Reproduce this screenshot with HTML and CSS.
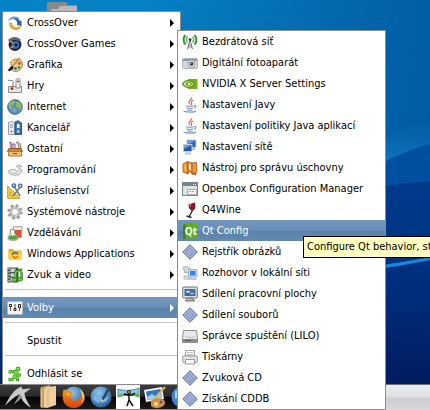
FILE: index.html
```
<!DOCTYPE html>
<html lang="cs">

<head>
    <meta charset="UTF-8">
    <title>Plocha</title>
    <link rel="stylesheet" href="styles.css">
</head>

<body>
    <svg class="defs" aria-hidden="true">
        <defs>
            <linearGradient id="sky" x1="0" y1="0" x2="0" y2="1">
                <stop offset="0" stop-color="#0683c8" />
                <stop offset="0.3" stop-color="#0873b8" />
                <stop offset="0.55" stop-color="#0560a8" />
                <stop offset="0.8" stop-color="#00397c" />
                <stop offset="1" stop-color="#001b5c" />
            </linearGradient>
            <linearGradient id="shade" x1="0" y1="0" x2="1" y2="0">
                <stop offset="0.3" stop-color="#005ca2" stop-opacity="0" />
                <stop offset="1" stop-color="#005ca2" stop-opacity="0.95" />
            </linearGradient>
            <linearGradient id="ray" x1="0" y1="0" x2="0" y2="1">
                <stop offset="0" stop-color="#0a67ad" stop-opacity="0" />
                <stop offset="1" stop-color="#1c86d8" />
            </linearGradient>
            <linearGradient id="deep" x1="0" y1="0" x2="0" y2="1">
                <stop offset="0" stop-color="#003c8c" />
                <stop offset="0.45" stop-color="#002f7c" />
                <stop offset="1" stop-color="#001858" />
            </linearGradient>
            <linearGradient id="fox" x1="0" y1="0" x2="0" y2="1">
                <stop offset="0" stop-color="#f79a1c" />
                <stop offset="1" stop-color="#d6400c" />
            </linearGradient>
            <radialGradient id="ball" cx="0.4" cy="0.3" r="0.8">
                <stop offset="0" stop-color="#8fc8ee" />
                <stop offset="1" stop-color="#17548e" />
            </radialGradient>
            <symbol id="diamond" viewBox="0 0 16 16">
                <path d="M8 .7 15.3 8 8 15.3.7 8z" fill="#8da0cb" stroke="#5f6d94" />
                <path d="M8 2.2 13.8 8 8 13.8 2.2 8z" fill="none" stroke="#b5c3e2" stroke-width=".8" />
                <path d="M5 9.5 9.5 4.5M6.5 11 11 6.5" stroke="#b4c2e2" />
            </symbol>
            <symbol id="java" viewBox="0 0 16 16">
                <path d="M9.5.5c1 2-3.5 3-2.5 5 .3.8 1 1.200 .8 2M11.500 3c-2 .8-3 1.800-2 3 .5.7 0 1.300-.5 1.700" fill="none" stroke="#e0605a" stroke-width="1.100" />
                <path d="M4.500 8.500c-1.500 1 5 1 7 .3M4.500 10.800c1.500.7 5 .6 6.500 0M5 12.800c1.500.6 4 .6 5.500 0M12 8.500c3-.5 2 2.500 0 2.700M2 13.800c-1 1.300 10 2 12 .2" fill="none" stroke="#7d96c6" stroke-width="1.100" />
            </symbol>
        </defs>
    </svg>

    <div class="desktop">
        <svg class="wallpaper" viewBox="0 0 430 410" preserveAspectRatio="none" aria-hidden="true">
            <rect width="430" height="410" fill="url(#sky)" />
            <rect width="430" height="410" fill="url(#shade)" />
            <path d="M360 148 430 118V180H360z" fill="url(#ray)" />
            <path d="M360 175C390 158 412 148 430 144V300H360z" fill="#004fa0" />
            <path d="M360 190C390 185 412 182 430 181V410H360z" fill="url(#deep)" />
            <path d="M360 270C390 263 412 261 430 257V260C412 264 390 267 360 272z" fill="#1687e0" />
        </svg>

        <svg class="desktop-folder" viewBox="0 0 30 30" aria-hidden="true">
            <path d="M0 2 1 0H19L21 3H30V28H0z" fill="#85898a" />
            <path d="M4 28V9L5 7H11L13 4H30V28z" fill="#b7bab9" />
        </svg>

        <nav class="menu main-menu" aria-label="Hlavní menu">
            <button class="item more">
                <svg class="icon" viewBox="0 0 16 16"><path d="M1 6C3 1 9 0 13 4L10 5C7 3 4 4 1 6z" fill="#6e9ad0" /><path d="M7 4C9 3 12 4 13 6L14.500 5.500V11L10 10C11 7 9 5 7 4z" fill="#2d62ac" /><path d="M2 7.500C2 13 6 15 9 15 13 15 14 12 14 11L10 12C7 12 6 11 5 8z" fill="#f0962a" /><path d="M4 9C5 12 8 13 11 12" fill="none" stroke="#ffd38a" /></svg>
                CrossOver
            </button>
            <button class="item more">
                <svg class="icon" viewBox="0 0 16 16"><circle cx="8" cy="8.500" r="6.500" fill="#252a33" /><path d="M1 4C5 0 11 0 14 4L11 5C8 3 5 4 3 6z" fill="#5c6778" /><circle cx="8.500" cy="9" r="3.700" fill="#2f73c4" /><circle cx="9" cy="9" r="1.500" fill="#0a1830" /><path d="M3 5 6 7M4 12 6 10" stroke="#eea13a" stroke-width="1.500" /></svg>
                CrossOver Games
            </button>
            <button class="item more">
                <svg class="icon" viewBox="0 0 16 16"><path d="M6 3C10 .5 16 3 15.500 8 15 13 10 15.500 6.500 14 4 13 7 11 5.500 9.500 4 8 2 5.500 6 3z" fill="#f2cf8b" stroke="#b07a2c" /><circle cx="9" cy="5" r="1.300" fill="#f5f0e0" stroke="#b07a2c" stroke-width=".5" /><circle cx="12.500" cy="6.500" r="1.400" fill="#e04030" /><circle cx="12" cy="10.500" r="1.400" fill="#3a9a36" /><circle cx="8.500" cy="11.500" r="1.400" fill="#3468c0" /><path d="M13 .8 4 11" stroke="#c98a35" stroke-width="1.500" /><path d="M5.500 9C3 9 3 12 .5 13 2 15 6 13.500 6.500 10z" fill="#222" /></svg>
                Grafika
            </button>
            <button class="item more">
                <svg class="icon" viewBox="0 0 16 16"><path d="M1.500 8.500H14.500V14.500H1.500z" fill="#e6e6e4" stroke="#8a8a88" /><path d="M9 1.500C9 .5 13 .5 13 1.500V10H9z" fill="#f3f3f1" stroke="#8a8a88" /><path d="M1 2C4 4 7 0 6 6V9" fill="none" stroke="#777" /><circle cx="5" cy="10.500" r="1.500" fill="#d32222" /><circle cx="11" cy="3.500" r="1.100" fill="#d32222" /></svg>
                Hry
            </button>
            <button class="item more">
                <svg class="icon" viewBox="0 0 16 16"><circle cx="8" cy="8" r="7.300" fill="#5b8fd0" stroke="#35629c" /><path d="M2 4C4 1 7 1 8 2L7 5 4 6 5 9 4 11C2 9 1 6 2 4zM9 3 13 3C15 6 15 9 14 11L12 9 9 8 9 6zM6 9 9 10 8 14 6 12z" fill="#93b956" /></svg>
                Internet
            </button>
            <button class="item more">
                <svg class="icon" viewBox="0 0 16 16"><path d="M1.500 2.500 5 1.500 7.500 3V14.500H1.500z" fill="#e9ebee" stroke="#9a9fa6" /><path d="M8 2 11 .7 14.500 3V14.500H8z" fill="#3f73b5" stroke="#2b538a" /><path d="M10 4H12.500V8H10z" fill="#f2f5fa" /><circle cx="11.200" cy="11.500" r="1.300" fill="#cfe0f5" /><path d="M3 5H6M3 7H6" stroke="#8c929a" /><circle cx="4.500" cy="11.500" r="1" fill="#777" /></svg>
                Kancelář
            </button>
            <button class="item more">
                <svg class="icon" viewBox="0 0 16 16"><path d="M2 2 4 1V8M5 3H8V8H5z" fill="#d9c4e0" stroke="#8b5a95" /><path d="M9 2 11 1 12 8M13 2 14 8" fill="none" stroke="#a48f97" stroke-width="1.500" /><path d="M2 7.500H14L15.500 10.500H.5z" fill="#c98436" stroke="#96591c" /><path d="M1.500 10.500H14.500V15H1.500z" fill="#f0bd78" stroke="#b4762e" /><path d="M6 12.500H10" stroke="#8c5016" /></svg>
                Ostatní
            </button>
            <button class="item more">
                <svg class="icon" viewBox="0 0 16 16"><path d="M1 9.500C3 7 8 7 9.500 9 12 9 13 8 12 6.500 11 5.500 9.500 5.500 9.500 4 10 2.500 14 3 14.500 4.500 12 4 11.500 4.500 13 5.500 16 8 14 12.500 10 13 6 13.500 2 12.500 1 9.500z" fill="#eeeeec" stroke="#a3a3a0" /><path d="M3 10C6 12 9 11 11 10.500" fill="none" stroke="#b8b8b5" /></svg>
                Programování
            </button>
            <button class="item more">
                <svg class="icon" viewBox="0 0 16 16"><path d="M.7 3V15.300H13z" fill="#f3cb3c" stroke="#c9a01c" /><path d="M3.500 9V12.500H7z" fill="#fff" stroke="#b28b12" stroke-width=".7" /><path d="M7 3 13 13M13.500 4 6 13" stroke="#777c80" stroke-width="1.500" /><circle cx="6.800" cy="2.500" r="1.700" fill="none" stroke="#2f66b4" stroke-width="1.300" /><circle cx="13.300" cy="2.800" r="1.700" fill="none" stroke="#2f66b4" stroke-width="1.300" /></svg>
                Příslušenství
            </button>
            <button class="item more">
                <svg class="icon" viewBox="0 0 16 16"><circle cx="8" cy="8" r="6.200" fill="none" stroke="#9b9b99" stroke-width="3" stroke-dasharray="2.400 2.470" /><circle cx="8" cy="8" r="4.300" fill="#fff" stroke="#979795" stroke-width="2.800" /><circle cx="8" cy="8" r="4.300" fill="none" stroke="#cfcfcd" stroke-width="1.500" /></svg>
                Systémové nástroje
            </button>
            <button class="item more">
                <svg class="icon" viewBox="0 0 16 16"><path d="M6 2 15 1.500 14.500 12.500H8z" fill="#f5efec" stroke="#a8a29e" /><path d="M8 5H14.500L14 12H8z" fill="#d9552c" /><path d="M3.500 4.500H7.500V8L11 13C11 15 10 15.300 6 15.300 2 15.300 1 15 1 13L3.500 8z" fill="#eef5ea" stroke="#8d978a" /><path d="M3 10.500H9L10.500 13C10 14.800 8 14.800 6 14.800 3 14.800 2 14.800 1.500 13z" fill="#4da33a" /></svg>
                Vzdělávání
            </button>
            <button class="item more">
                <svg class="icon" viewBox="0 0 16 16"><path d="M1.500 3H6L7.500 4.500H14.500V13.500H1.500z" fill="#f0b51c" /><path d="M1.500 6H14.500V13.500H1.500z" fill="#ffcf38" /><path d="M5 9C6 6.500 9 6 11 8" fill="none" stroke="#2d62ac" stroke-width="1.500" /><path d="M6 10C7 12.500 10 12.500 11 10" fill="none" stroke="#e8651c" stroke-width="1.500" /></svg>
                Windows Applications
            </button>
            <button class="item more">
                <svg class="icon" viewBox="0 0 16 16"><path d="M.5.500H11.500V15.500H.5z" fill="#4d504e" /><path d="M3.500 1.500H8.500V5H3.500zM3.500 6.200H8.500V9.800H3.500zM3.500 11H8.500V14.500H3.500z" fill="#c9d6dd" /><path d="M2 1V15" stroke="#fff" stroke-dasharray="1.500 1.500" /><path d="M8.500 12V4.500L14 3V5M14.500 5V12" fill="none" stroke="#2f8a1c" stroke-width="2.500" /><path d="M8.500 12V5L14 4V12" fill="none" stroke="#76cc43" stroke-width="1.200" /><ellipse cx="7.500" cy="12.800" rx="2.200" ry="1.800" fill="#76cc43" stroke="#2f8a1c" /><ellipse cx="13.200" cy="12.300" rx="2.200" ry="1.800" fill="#76cc43" stroke="#2f8a1c" /></svg>
                Zvuk a video
            </button>
            <hr>
            <button class="item more selected">
                <svg class="icon" viewBox="0 0 16 16"><rect x=".5" y="1.500" width="15" height="13" rx="1" fill="#f1f1ef" stroke="#b5b5b2" /><path d="M3.500 4V11M8 4V11M12.500 4V11" stroke="#555" /><path d="M2.500 4.500H4.500V6.500H2.500zM7 8.500H9V10.500H7zM11.500 4.500H13.500V7.500H11.500z" fill="#fff" stroke="#222" /></svg>
                Volby
            </button>
            <hr>
            <button class="item">
                <span class="icon"></span>
                Spustit
            </button>
            <hr>
            <button class="item">
                <svg class="icon" viewBox="0 0 16 16"><path d="M3 7.500V5.500H9L7.500 10.500 10.500 12V15M7.500 10.500 5.500 13.500H1.500M9.500 6.500 11 9H14" fill="none" stroke="#2f9a12" stroke-width="3" stroke-linejoin="round" /><circle cx="11" cy="3" r="2" fill="#8be04e" stroke="#2f9a12" /><path d="M3 7.500V5.500H9L7.500 10.500 10.500 12V14.500M7.500 10.500 5.500 13.500H2M9.500 6.500 11 9H13.500" fill="none" stroke="#7ddb3f" stroke-width="1.500" /></svg>
                Odhlásit se
            </button>
        </nav>

        <nav class="menu sub-menu" aria-label="Volby">
            <button class="item">
                <svg class="icon" viewBox="0 0 16 16"><path d="M8 6 5.500 15M8 6 10.500 15M6.500 11H9.500M6 13H10" stroke="#777" fill="none" /><circle cx="8" cy="5.500" r="1.500" fill="#444" /><path d="M5.500 2.500C4 4 4 7 5.500 8.500M10.500 2.500C12 4 12 7 10.500 8.500" fill="none" stroke="#58b55c" stroke-width="1.500" /><path d="M3.500 1C1 3.500 1 8 3.500 10.500M12.500 1C15 3.500 15 8 12.500 10.500" fill="none" stroke="#2c9a38" stroke-width="2" /></svg>
                Bezdrátová síť
            </button>
            <button class="item">
                <svg class="icon" viewBox="0 0 16 16"><rect x=".5" y="3.500" width="15" height="10" rx="1" fill="#d5d7d8" stroke="#b3b6b8" /><path d="M1 4H15V6H1z" fill="#959a9e" /><circle cx="9.500" cy="8.800" r="3.700" fill="#eceeef" stroke="#9a9ea2" /><circle cx="9.500" cy="8.800" r="2" fill="#35404f" /><circle cx="9" cy="8.200" r=".7" fill="#a9c0df" /></svg>
                Digitální fotoaparát
            </button>
            <button class="item">
                <svg class="icon" viewBox="0 0 16 16"><path d="M6 3H15.500V13H6z" fill="#76b01c" /><path d="M.5 8C3 4 8 3 12.500 8 9 13 3 12 .5 8z" fill="#e4f0cc" stroke="#5f9614" stroke-width="1.300" /><path d="M3 8C5 5 8 5 10.500 8 8 11 5 11 3 8z" fill="#76b01c" /><circle cx="7" cy="8" r="1.200" fill="#e4f0cc" /></svg>
                NVIDIA X Server Settings
            </button>
            <button class="item"><svg class="icon"><use href="#java" /></svg>Nastavení Javy</button>
            <button class="item"><svg class="icon"><use href="#java" /></svg>Nastavení politiky Java aplikací</button>
            <button class="item">
                <svg class="icon" viewBox="0 0 16 16"><path d="M5 1H14V8.500H5z" fill="#2e63b8" stroke="#c8ccd2" /><path d="M5.500 1.500H13.500L6 6z" fill="#6b9ade" /><path d="M9 10H13" stroke="#bbb" stroke-width="2" /><path d="M1.500 5.500H10V12.500H1.500z" fill="#2458ae" stroke="#c8ccd2" /><path d="M2 6H9.500L2 10z" fill="#6b9ade" /><path d="M3 14.500H9" stroke="#c3c6ca" stroke-width="2" /></svg>
                Nastavení sítě
            </button>
            <button class="item">
                <svg class="icon" viewBox="0 0 16 16"><path d="M1 4 5.500 1.500 10 3 14.500 2.500 15 12.500 10.500 14.500 8 11 6 14 1 12z" fill="#e9993c" stroke="#b96a22" /><path d="M5.500 2 6 13M10 3V14" stroke="#a95a16" /><path d="M7 4 9 4.500V10L7 9z" fill="#f8e6c4" /><path d="M2.500 5 4 4.500V11L2.500 10.500z" fill="#f6bb68" /><path d="M11 12.500 14 15" stroke="#d33b22" stroke-width="1.500" /></svg>
                Nástroj pro správu úschovny
            </button>
            <button class="item">
                <svg class="icon" viewBox="0 0 16 16"><rect x=".5" y="1.500" width="15" height="13" fill="#dfe2e3" stroke="#7c878c" /><path d="M1 2H15V5H1z" fill="#6d8596" /><path d="M11 3.500H14" stroke="#fff" stroke-dasharray="1 1" /><path d="M5.500 8.500H14.500V13.500H5.500z" fill="#f6f6f4" stroke="#a5abad" /><path d="M7 10.500H13" stroke="#a0a6a8" stroke-dasharray="2 1" /></svg>
                Openbox Configuration Manager
            </button>
            <button class="item">
                <svg class="icon" viewBox="0 0 16 16"><path d="M6.500 2.500 13 .5C14 5 13 8.500 10.500 8.500 8 8.500 6.500 6 6.500 2.500z" fill="#8d1426" /><path d="M7.500 3 9 2.500 8.700 5z" fill="#e8c2c8" /><path d="M10.500 8C9.500 11 8 12 7.500 14.500" fill="none" stroke="#222" stroke-width="1.300" /><path d="M4.500 14 9.500 15.500" stroke="#222" stroke-width="1.500" /></svg>
                Q4Wine
            </button>
            <button class="item selected">
                <svg class="icon" viewBox="0 0 16 16"><path d="M1 2.500 3.500.5H15.500V14L13.500 15.500H1z" fill="#5cae1e" /><path d="M1 2.500 3.500.5V15.500H1z" fill="#3d8410" /><text x="9" y="12" class="qt-mark">Qt</text></svg>
                Qt Config
            </button>
            <button class="item"><svg class="icon"><use href="#diamond" /></svg>Rejstřík obrázků</button>
            <button class="item">
                <svg class="icon" viewBox="0 0 16 16"><path d="M1 2.500 4 1.500 8 3V7L3 8z" fill="#d6dade" stroke="#99a0a6" stroke-width=".8" /><path d="M2 11H8V14H2z" fill="#e0e3e6" stroke="#a2a8ad" stroke-width=".8" /><path d="M6.500 4.500H15V12H6.500z" fill="#d2dbe6" stroke="#a7b5c8" /><path d="M8 6H13.500V10.500H8z" fill="#2f86e4" /><path d="M6 13.500 14.500 14" stroke="#b9c2cd" stroke-width="2" /></svg>
                Rozhovor v lokální síti
            </button>
            <button class="item">
                <svg class="icon" viewBox="0 0 16 16"><rect x=".7" y="1" width="14.600" height="11" rx="1" fill="#dfe1e0" stroke="#6e7472" /><path d="M2.500 3H13.500V10H2.500z" fill="#3c6eac" /><path d="M4 4.500H8.500V7H4zM8 6.500H12V8.500H8z" fill="#d6e3f3" stroke="#234b80" stroke-width=".5" /><path d="M5.500 12H10.500L12.500 15H3.500z" fill="#b4b8b6" stroke="#6e7472" /></svg>
                Sdílení pracovní plochy
            </button>
            <button class="item"><svg class="icon"><use href="#diamond" /></svg>Sdílení souborů</button>
            <button class="item">
                <svg class="icon" viewBox="0 0 16 16"><path d="M1.500 2.500H14.500L15.500 10V14.500H.5V10z" fill="#e9e9e7" stroke="#8f918e" /><path d="M1 11H15V14H1z" fill="#8b8d8a" /><path d="M3 8C5 10 11 10 13 8" fill="none" stroke="#bbbdb9" /><path d="M3 12.500H9" stroke="#5d5f5c" /></svg>
                Správce spuštění (LILO)
            </button>
            <button class="item">
                <svg class="icon" viewBox="0 0 16 16"><path d="M3.500 1.500H12.500V7H3.500z" fill="#fff" stroke="#a0a09e" /><path d="M5 3.500H11M5 5.500H11" stroke="#c4c4c2" /><rect x=".7" y="7" width="14.600" height="6.500" rx="1" fill="#e4e4e2" stroke="#999997" /><path d="M3.500 10.500H12.500V15H3.500z" fill="#fafaf8" stroke="#999997" /></svg>
                Tiskárny
            </button>
            <button class="item"><svg class="icon"><use href="#diamond" /></svg>Zvuková CD</button>
            <button class="item"><svg class="icon"><use href="#diamond" /></svg>Získání CDDB</button>
        </nav>
        <div class="tooltip" role="tooltip">Configure Qt behavior, styles</div>

        <footer class="taskbar">
            <div class="launchers">
                <button class="launcher start" aria-label="Menu">
                    <svg viewBox="0 0 28 24"><path d="M0 21C6 9 10 4 17 1L18 4 27 3 20 8C21 14 24 18 27 23 20 20 17 14 15 9 10 12 5 16 0 21z" fill="#c9cbcc" /><path d="M9 20C12 15 14 12 15 9L18 12C15 15 12 18 9 20z" fill="#8e9192" /></svg>
                </button>
                <button class="launcher" aria-label="Složka">
                    <svg viewBox="0 0 24 24"><path d="M6 2 15 0V22L6 23z" fill="#c69f62" /><path d="M9 4 12 2 21 1V20L12 23 9 22z" fill="#efcf9b" /><path d="M13 4V22" stroke="#d5b078" /><path d="M6 3V22" stroke="#f5dcb2" /></svg>
                </button>
                <button class="launcher" aria-label="Firefox">
                    <svg viewBox="0 0 24 24"><circle cx="12" cy="12" r="10.500" fill="url(#ball)" /><path d="M2 4C3 6 5 5 7 6L11 7 9 10C8 14 12 17 16 15 20 13 21 8 18 4 23 8 24 14 21 18 17 24 8 25 3 19 0 15 0 8 2 4z" fill="url(#fox)" /><path d="M18 4C23 9 23 14 20 18 22 13 20 10 18 4z" fill="#ffdf4c" /><path d="M4 8 9 8 6 12z" fill="#fbb22e" /></svg>
                </button>
                <button class="launcher" aria-label="Editor">
                    <svg viewBox="0 0 24 24"><circle cx="12" cy="12" r="10.500" fill="url(#ball)" /><path d="M4 13C8 7 15 17 20 11 19 19 7 21 4 13z" fill="#76b7e4" /><path d="M19 2 12 15 11 18 14 16 21 4z" fill="#274866" /><path d="M12 15 14 16" stroke="#f0d28c" stroke-width="2" /></svg>
                </button>
                <button class="launcher" aria-label="Prohlížeč obrázků">
                    <svg viewBox="0 0 24 24"><path d="M0 0H24V24H0z" fill="#fff" /><path d="M2 4C8 6 16 6 23 3V12C16 9 8 10 2 12z" fill="#8ccbe6" stroke="#5b8296" /><path d="M2 10C8 7 16 8 23 9V12C16 9 8 10 2 12z" fill="#6eaa48" /><path d="M8 9 12 10H16L19 8M13 9V15L11 21M13 15 17 21" fill="none" stroke="#111" stroke-width="1.500" /><circle cx="13" cy="7" r="1.500" fill="#d8c54a" stroke="#111" /></svg>
                </button>
                <button class="launcher" aria-label="Kreslení">
                    <svg viewBox="0 0 24 24"><path d="M1 5 19 2 21 14 3 17z" fill="#f5f5f2" /><path d="M3 6.500 17.500 4 19 12.500 4.500 15z" fill="#2a78c8" /><path d="M4 12 9 9 12 11 18 8 19 12.500 4.500 15z" fill="#9dd0ef" /><path d="M8 16C12 11 22 13 22 18 21 23 12 25 8 21z" fill="#d98e3a" /><circle cx="13" cy="19" r="2" fill="#f8e2b8" /><circle cx="18" cy="17" r="1.500" fill="#3966bb" /><path d="M22 2 12 13" stroke="#e0b048" stroke-width="2" /></svg>
                </button>
                <button class="launcher" aria-label="Internet">
                    <svg viewBox="0 0 24 24"><circle cx="12" cy="12" r="10.500" fill="#3c82d6" /><path d="M5 6 12 5 9 12 5 14z" fill="#a9cdf5" /></svg>
                </button>
            </div>
        </footer>
    </div>
</body>

</html>
```
FILE: styles.css
```
* {
    box-sizing: border-box;
}

body {
    margin: 0;
    font-family: "DejaVu Sans Condensed", "DejaVu Sans", sans-serif;
    font-size: 11px;
    color: #000;
    overflow: hidden;
}

.defs {
    position: absolute;
    width: 0;
    height: 0;
}

.desktop {
    position: relative;
    display: flex;
    flex-direction: column;
    justify-content: flex-end;
    min-height: 100vh;
    overflow: hidden;
    background-color: #00479a;
}

.wallpaper {
    position: absolute;
    top: 0;
    left: 0;
    width: 100%;
    height: 100%;
}

.desktop-folder {
    position: absolute;
    top: 2px;
    left: 47px;
    width: 30px;
    height: 30px;
}

/* menus */
.menu {
    position: absolute;
    background-color: #fff;
    border: 1px solid #8c8c8c;
}

.main-menu {
    top: 11px;
    left: 2px;
    z-index: 1;
    width: 179px;
}

.sub-menu {
    top: 30px;
    left: 177px;
    z-index: 2;
    width: 209px;
}

.item {
    display: flex;
    align-items: center;
    gap: 4px;
    width: 100%;
    height: 21px;
    padding: 0 6px 0 4px;
    border: none;
    background: none;
    font: inherit;
    color: inherit;
    text-align: left;
    white-space: nowrap;
}

.icon {
    flex: none;
    width: 16px;
    height: 16px;
}

.more::after {
    content: "";
    margin-left: auto;
    border: 4px solid transparent;
    border-left-color: #000;
    border-right: none;
}

.selected {
    color: #fff;
    background: linear-gradient(#7096bf, #6a90b8 48%, #5b82aa 52%, #6289b2);
}

.selected::after {
    border-left-color: #fff;
}

.menu hr {
    height: 1px;
    margin: 4px 0 7px 2px;
    border: none;
    background-color: #c3c3c3;
}

.qt-mark {
    font-family: "Open Sans", sans-serif;
    font-size: 10px;
    font-weight: bold;
    fill: #fff;
    text-anchor: middle;
}

.tooltip {
    position: absolute;
    top: 236px;
    left: 303px;
    z-index: 3;
    padding: 0 3px;
    border: 1px solid #000;
    background-color: #ffffc0;
    line-height: 20px;
    white-space: nowrap;
}

/* taskbar */
.taskbar {
    position: relative;
    display: flex;
    height: 26px;
    border-top: 1px solid #6d7078;
    background: linear-gradient(#ebecef, #dfe0e4 48%, #cbcdd3 52%, #d6d8dd);
}

.launchers {
    display: flex;
    align-items: center;
    gap: 3px;
    padding-left: 5px;
    border-bottom: 1px solid #8f8f8f;
    background: linear-gradient(#3c3c3c, #2c2c2c 45%, #050505 52%, #1a1a1a);
}

.launcher {
    width: 24px;
    height: 24px;
    padding: 0;
    border: none;
    background: none;
}

.launcher svg {
    display: block;
    width: 100%;
    height: 100%;
}

.start {
    width: 27px;
}
```
